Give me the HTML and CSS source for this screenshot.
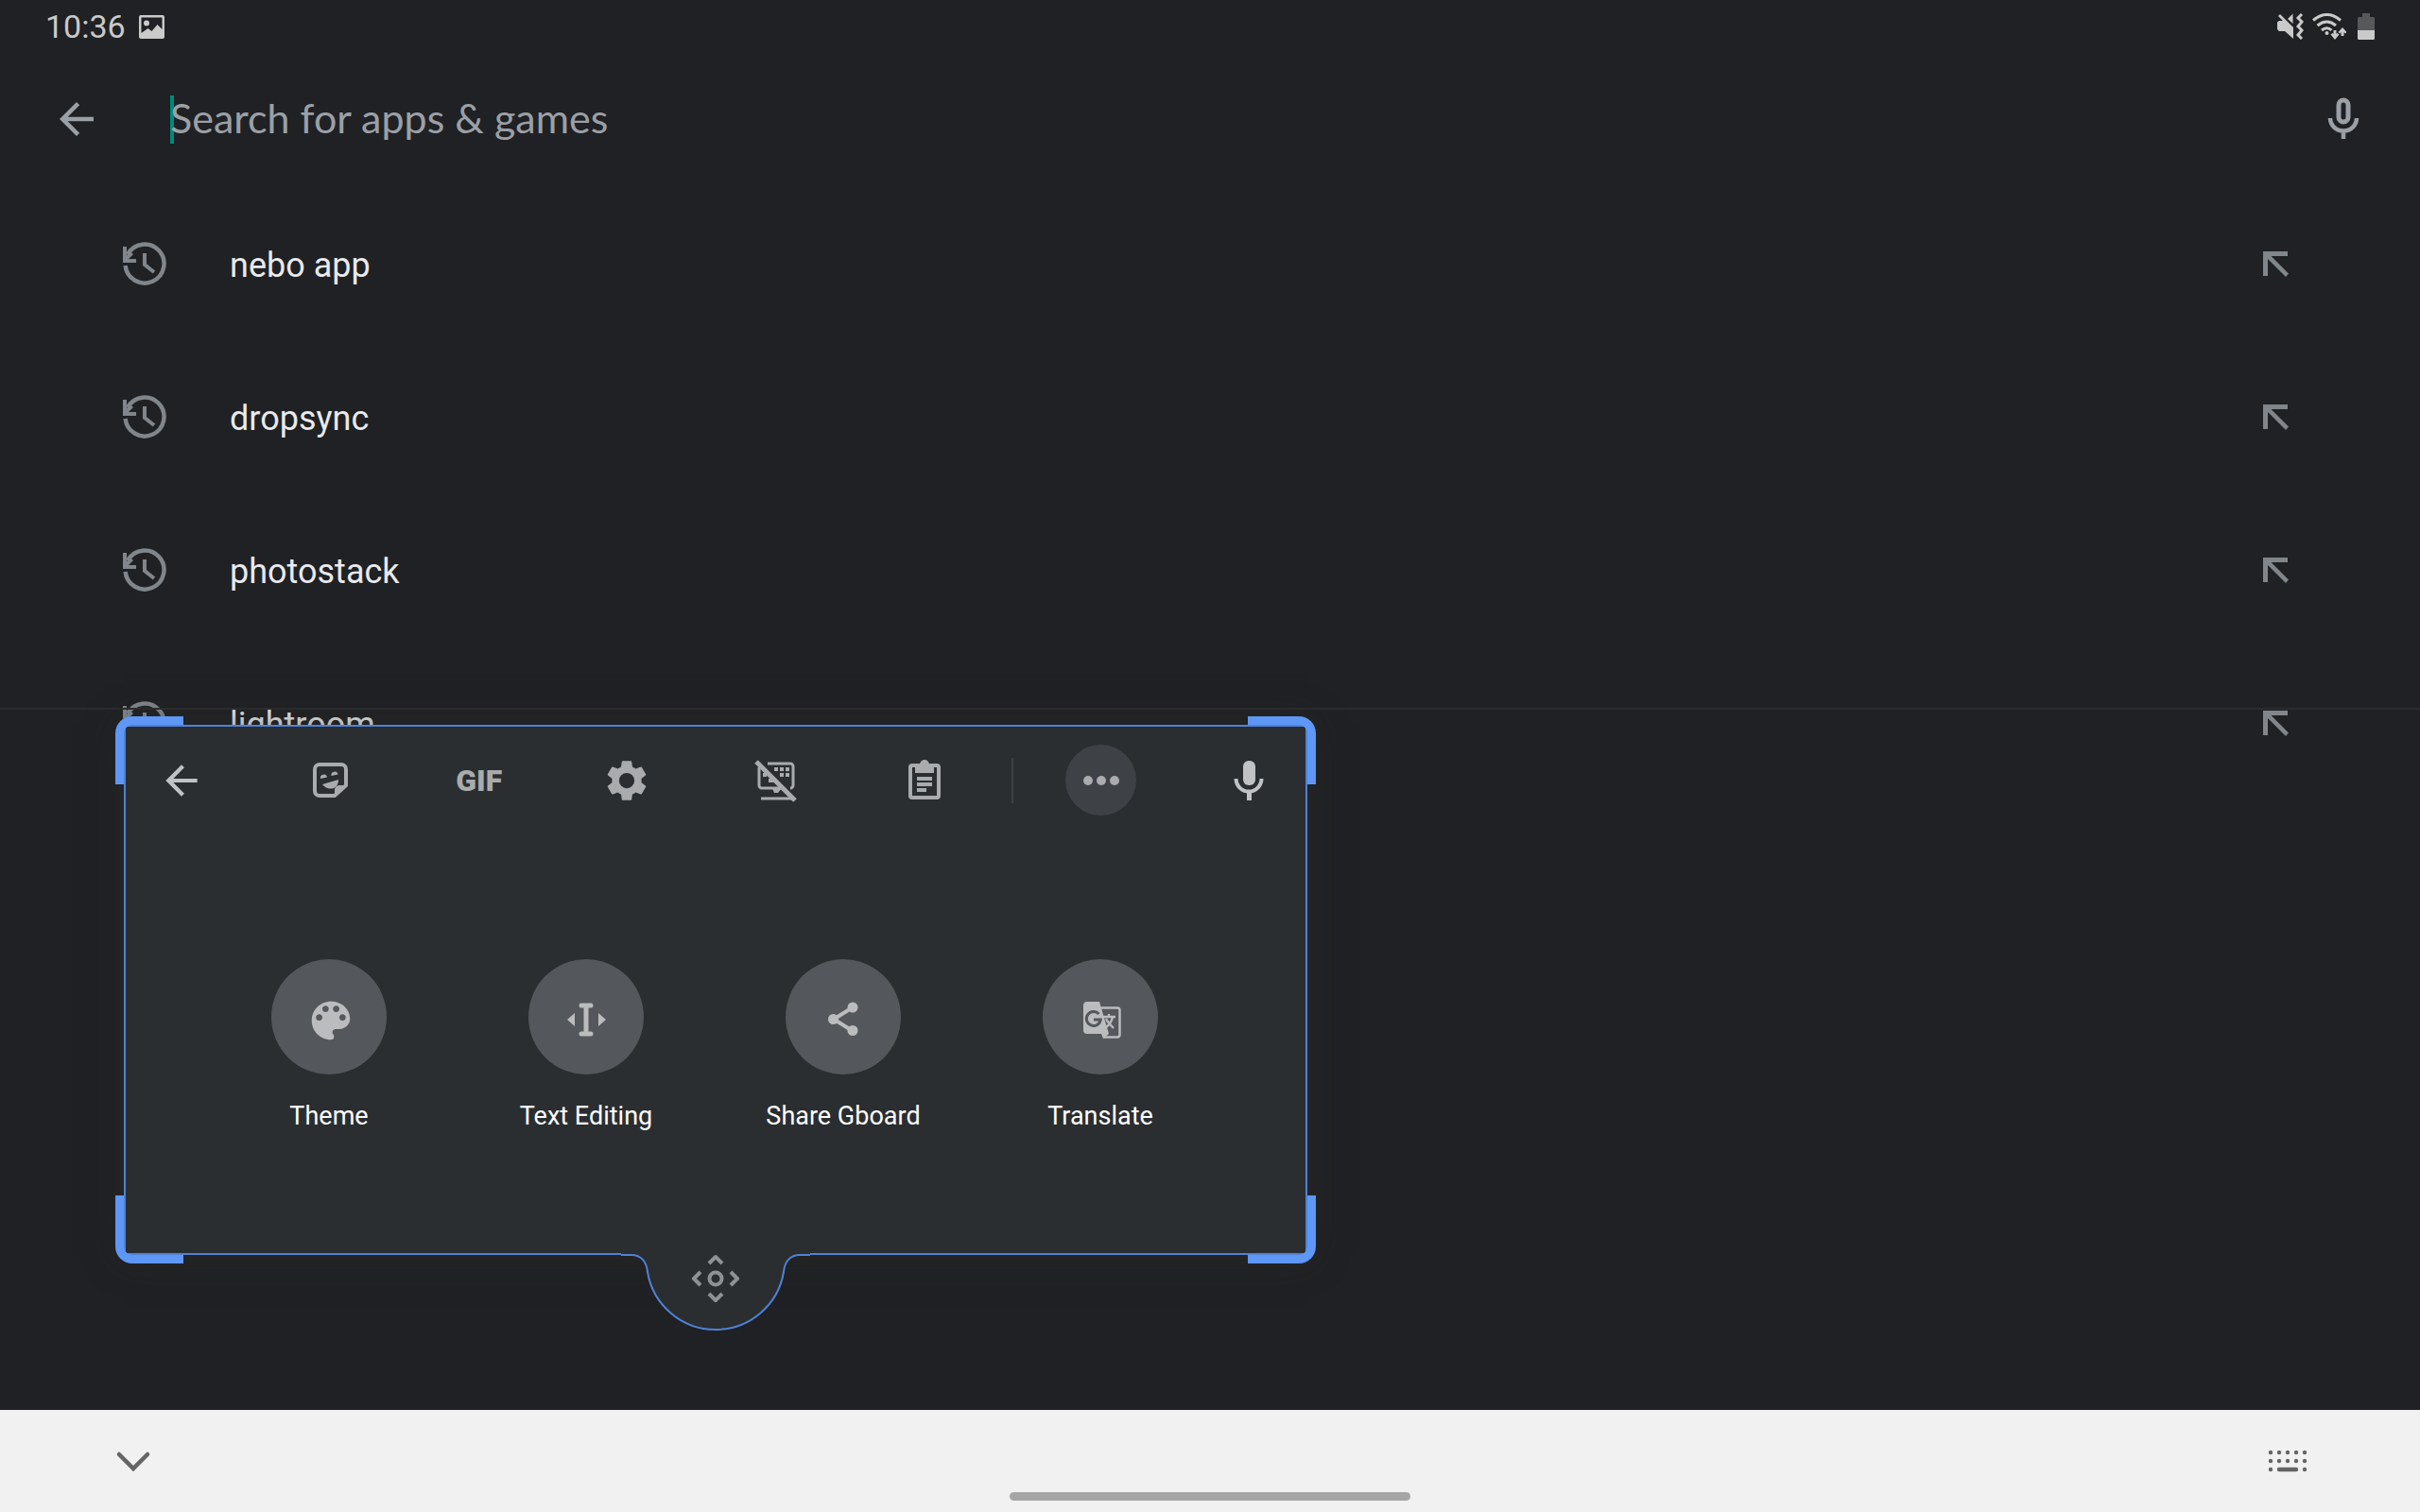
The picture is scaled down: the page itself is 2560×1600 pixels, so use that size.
FILE: index.html
```html
<!DOCTYPE html>
<html lang="en">
<head>
  <meta charset="UTF-8" />
  <meta name="viewport" content="width=device-width, initial-scale=1.0"/>
  <title>Search for apps &amp; games</title>
  <link rel="stylesheet" href="styles.css">
</head>
<body>
  <!-- Shared icons -->
  <svg class="sprite" aria-hidden="true">
    <symbol id="icon-back" viewBox="0 0 24 24"><path d="M20 11H7.83l5.59-5.59L12 4l-8 8 8 8 1.41-1.41L7.83 13H20v-2z"/></symbol>
    <symbol id="icon-history" viewBox="0 0 46 46">
      <path d="M5 13.200A20.500 20.500 0 1 1 2.600 25" fill="none" stroke="currentColor" stroke-width="4.500"/>
      <path d="M23 12v12l10 8" fill="none" stroke="currentColor" stroke-width="4"/>
      <path d="M0 5h4v9l4-4 3 3-5 5h8v4H0z"/>
    </symbol>
    <symbol id="icon-insert" viewBox="0 0 27 27"><path d="M0 0h26v5H8.500L27 23.500 24 27 5 8v18H0z"/></symbol>
  </svg>

  <div class="screen">
    <div class="status-bar">
      <div class="status-group">
        <span class="clock">10:36</span>
        <svg class="status-image" viewBox="0 0 27 25"><path fill-rule="evenodd" d="M2 0h23a2 2 0 0 1 2 2v21a2 2 0 0 1-2 2H2a2 2 0 0 1-2-2V2a2 2 0 0 1 2-2zM2.500 2.500V19l7-5 4 3 6-7 5 5V2.500zM8 5.500a3 3 0 1 1 0 6 3 3 0 0 1 0-6z"/></svg>
      </div>
      <div class="status-group">
        <svg class="status-mute" viewBox="0 0 28 28">
          <path d="M0 9.500L2 8h4L1 3l2-2 14 14v12L8 19H2l-2-2zM11 6l5.500-5.500V11z"/>
          <path d="M26 1l-4 4 4 4-4 5 4 4-4 5 4 4" fill="none" stroke="currentColor" stroke-width="3"/>
        </svg>
        <svg class="status-wifi" viewBox="0 0 36 28">
          <g fill="none" stroke="currentColor" stroke-width="3">
            <path d="M1 7.500q14.500-12 29 0M5.500 13q10-8 19.500 0M10 18q5.500-4.500 10.500 0"/>
            <path d="M24 18v7M32 24v-7"/>
          </g>
          <circle cx="15.500" cy="21" r="2"/>
          <path d="M19.500 22.500l2-1.500 2.500 2 2.500-2 2 1.500-4.500 5.500zM27.500 20l4.500-5 4.500 5-1.500 1.500-3-2.500-3 2.500z"/>
        </svg>
        <svg class="status-battery" viewBox="0 0 18 28">
          <path d="M5 0h8v4h3.500A1.500 1.500 0 0 1 18 5.500V18H0V5.500A1.500 1.500 0 0 1 1.500 4H5z" fill="#57585a"/>
          <path d="M0 18h18v8.500a1.500 1.500 0 0 1-1.500 1.500h-15A1.500 1.500 0 0 1 0 26.500z"/>
        </svg>
      </div>
    </div>

    <header class="search-bar">
      <button class="icon-btn" aria-label="Back"><svg class="icon"><use href="#icon-back"/></svg></button>
      <div class="search-field">
        <span class="caret"></span>
        <input class="search-input" type="text" placeholder="Search for apps &amp; games" aria-label="Search for apps &amp; games">
      </div>
      <button class="icon-btn" aria-label="Voice search">
        <svg class="icon" viewBox="0 0 54 54">
          <g fill="none" stroke="currentColor">
            <rect x="22" y="7" width="10" height="23" rx="5" stroke-width="5"/>
            <path d="M13 26a14 13.500 0 0 0 28 0M27 39v9" stroke-width="4.500"/>
          </g>
        </svg>
      </button>
    </header>

    <main class="content">
      <ul class="history">
        <li class="history-row">
          <svg class="history-icon"><use href="#icon-history"/></svg>
          <a class="history-text" href="#">nebo app</a>
          <button class="insert-btn" aria-label="Insert nebo app"><svg class="insert-icon"><use href="#icon-insert"/></svg></button>
        </li>
        <li class="history-row">
          <svg class="history-icon"><use href="#icon-history"/></svg>
          <a class="history-text" href="#">dropsync</a>
          <button class="insert-btn" aria-label="Insert dropsync"><svg class="insert-icon"><use href="#icon-insert"/></svg></button>
        </li>
        <li class="history-row">
          <svg class="history-icon"><use href="#icon-history"/></svg>
          <a class="history-text" href="#">photostack</a>
          <button class="insert-btn" aria-label="Insert photostack"><svg class="insert-icon"><use href="#icon-insert"/></svg></button>
        </li>
        <li class="history-row">
          <svg class="history-icon"><use href="#icon-history"/></svg>
          <a class="history-text" href="#">lightroom</a>
          <button class="insert-btn" aria-label="Insert lightroom"><svg class="insert-icon"><use href="#icon-insert"/></svg></button>
        </li>
      </ul>
      <div class="ime-line"></div>
    </main>

    <nav class="nav-bar">
      <button class="nav-btn" aria-label="Hide keyboard">
        <svg class="nav-icon" viewBox="0 0 42 42"><path d="M7 14l15 15 15-15" fill="none" stroke="currentColor" stroke-width="4.500" stroke-linecap="round"/></svg>
      </button>
      <span class="home-pill"></span>
      <button class="nav-btn" aria-label="Change keyboard">
        <svg class="nav-icon" viewBox="0 0 42 42">
          <g fill="none" stroke="currentColor" stroke-width="4.400" stroke-linecap="round">
            <path d="M3 12h0M12 12h0M21 12h0M30 12h0M39 12h0M3 21h0M12 21h0M21 21h0M30 21h0M39 21h0M3 30h0M12 30h18M39 30h0"/>
          </g>
        </svg>
      </button>
    </nav>

    <!-- Floating keyboard -->
    <section class="keyboard" aria-label="Keyboard">
      <span class="corner corner-tl"></span>
      <span class="corner corner-tr"></span>
      <span class="corner corner-bl"></span>
      <span class="corner corner-br"></span>

      <div class="toolbar">
        <div class="tools">
          <button class="icon-btn bright" aria-label="Back"><svg class="icon icon-small"><use href="#icon-back"/></svg></button>
          <button class="icon-btn" aria-label="Stickers">
            <svg class="icon" viewBox="0 0 54 54">
              <path d="M17 10h23a5 5 0 0 1 5 5v17L33 43H17a5 5 0 0 1-5-5V15a5 5 0 0 1 5-5z" fill="none" stroke="currentColor" stroke-width="4"/>
              <path d="M33 44v-7a5 5 0 0 1 5-5h9z"/>
              <path d="M20 31l17-5c0 6-3 9-7 9.500S22 34 20 31zM18 25a3.500 3.500 0 1 1 7-1.500zM29.500 22a3.500 3.500 0 1 1 7-1.500z"/>
            </svg>
          </button>
          <button class="icon-btn gif-btn">GIF</button>
          <button class="icon-btn" aria-label="Settings">
            <svg class="icon icon-small" viewBox="0 0 24 24"><path d="M19.430 12.980c.04-.32.07-.64.07-.98s-.03-.66-.07-.98l2.110-1.650c.19-.15.24-.42.12-.64l-2-3.460c-.12-.22-.39-.3-.61-.22l-2.490 1c-.52-.4-1.080-.73-1.690-.98l-.38-2.650C14.460 2.180 14.250 2 14 2h-4c-.25 0-.46.18-.49.42l-.38 2.650c-.61.25-1.170.59-1.690.98l-2.490-1c-.23-.09-.49 0-.61.22l-2 3.460c-.13.22-.07.49.12.64l2.110 1.650c-.04.32-.07.65-.07.98s.03.66.07.98l-2.110 1.650c-.19.15-.24.42-.12.64l2 3.460c.12.22.39.3.61.22l2.490-1c.52.4 1.080.73 1.690.98l.38 2.650c.03.24.24.42.49.42h4c.25 0 .46-.18.49-.42l.38-2.650c.61-.25 1.170-.59 1.690-.98l2.490 1c.23.09.49 0 .61-.22l2-3.460c.12-.22.07-.49-.12-.64l-2.110-1.650zM12 15.900a3.900 3.900 0 1 1 0-7.800 3.900 3.900 0 0 1 0 7.800z"/></svg>
          </button>
          <button class="icon-btn" aria-label="Floating keyboard">
            <svg class="icon" viewBox="0 0 54 54">
              <g fill="none" stroke="currentColor">
                <path d="M19 9h24a3 3 0 0 1 3 3v20a3 3 0 0 1-3 3M10 13v19a3 3 0 0 0 3 3h20" stroke-width="3"/>
                <path d="M12 46h34" stroke-width="3"/>
                <path d="M7 7l41 41" stroke-width="5"/>
              </g>
              <path d="M26 13h4v4h-4zM32 13h4v4h-4zM38 13h4v4h-4zM32 19h4v4h-4zM38 19h4v4h-4zM14 19h4v4h-4zM20 25h8v4h-8zM24 35h10l-4 5h-4z"/>
            </svg>
          </button>
          <button class="icon-btn" aria-label="Clipboard">
            <svg class="icon" viewBox="0 0 54 54">
              <rect x="12" y="11" width="30" height="34" rx="2" fill="none" stroke="currentColor" stroke-width="4"/>
              <path fill-rule="evenodd" d="M17 10h5a5 5 0 0 1 10 0h5v9H17zM27 9a2 2 0 1 0 0 4 2 2 0 0 0 0-4z"/>
              <path d="M19 23h16v4H19zM19 29h16v4H19zM19 35h10v4H19z"/>
            </svg>
          </button>
        </div>
        <span class="tool-divider"></span>
        <div class="tools tools-end">
          <button class="icon-btn more-btn" aria-label="More">
            <svg class="icon" viewBox="0 0 54 54"><circle cx="13" cy="27" r="5"/><circle cx="27" cy="27" r="5"/><circle cx="41" cy="27" r="5"/></svg>
          </button>
          <button class="icon-btn bright" aria-label="Voice typing">
            <svg class="icon" viewBox="0 0 54 54">
              <rect x="21" y="6" width="13" height="26" rx="6"/>
              <path d="M13.500 25a13.500 13.500 0 0 0 27 0" fill="none" stroke="currentColor" stroke-width="4"/>
              <path d="M25 38h5v10h-5z"/>
            </svg>
          </button>
        </div>
      </div>

      <div class="tiles">
        <button class="tile">
          <span class="tile-circle">
            <svg class="tile-icon" viewBox="0 0 54 54"><path transform="translate(2 1) scale(2.25)" d="M12 3c-4.970 0-9 4.030-9 9s4.030 9 9 9c.83 0 1.500-.67 1.500-1.500 0-.39-.15-.74-.39-1.010-.23-.26-.38-.61-.38-.99 0-.83.67-1.500 1.500-1.500H16c2.760 0 5-2.240 5-5 0-4.420-4.030-8-9-8zm-5.500 9c-.83 0-1.500-.67-1.500-1.500S5.670 9 6.500 9 8 9.670 8 10.500 7.330 12 6.500 12zm3-4C8.670 8 8 7.330 8 6.500S8.670 5 9.500 5s1.500.67 1.500 1.500S10.330 8 9.500 8zm5 0c-.83 0-1.500-.67-1.500-1.500S13.670 5 14.500 5s1.500.67 1.500 1.500S15.330 8 14.500 8zm3 4c-.83 0-1.500-.67-1.500-1.500S16.670 9 17.500 9s1.500.67 1.500 1.500-.67 1.500-1.500 1.500z"/></svg>
          </span>
          <span class="tile-label">Theme</span>
        </button>
        <button class="tile">
          <span class="tile-circle">
            <svg class="tile-icon" viewBox="0 0 54 54">
              <path d="M22 12h10M22 42h10M27 12v30" fill="none" stroke="currentColor" stroke-width="5" stroke-linecap="round"/>
              <path d="M15 20v14l-8-7zM40 20v14l8-7z"/>
            </svg>
          </span>
          <span class="tile-label">Text Editing</span>
        </button>
        <button class="tile">
          <span class="tile-circle">
            <svg class="tile-icon" viewBox="0 0 54 54">
              <path d="M37 14L17 26.500 37 39" fill="none" stroke="currentColor" stroke-width="4"/>
              <circle cx="37" cy="14" r="5.500"/><circle cx="16.500" cy="26.500" r="5.500"/><circle cx="37" cy="38.500" r="5.500"/>
            </svg>
          </span>
          <span class="tile-label">Share Gboard</span>
        </button>
        <button class="tile">
          <span class="tile-circle">
            <svg class="tile-icon" viewBox="0 0 54 54">
              <g transform="translate(2 1)">
                <path d="M11 7h13l10 34H11a4 4 0 0 1-4-4V11a4 4 0 0 1 4-4z"/>
                <path d="M25 13.500h18a2.500 2.500 0 0 1 2.500 2.500v26a2.500 2.500 0 0 1-2.500 2.500H28" fill="none" stroke="currentColor" stroke-width="2.500"/>
                <path d="M26 41h8l-6 5z"/>
                <path d="M23.500 20a7.500 7.500 0 1 0 1.800 6H18" fill="none" stroke="#54575b" stroke-width="3"/>
                <path d="M28 23h13M34 20v3M38 23c-1 6-4 9-8 12M31 25c2 4 5 7 8 10" fill="none" stroke="currentColor" stroke-width="2.300"/>
              </g>
            </svg>
          </span>
          <span class="tile-label">Translate</span>
        </button>
      </div>

      <button class="drag-handle" aria-label="Move keyboard">
        <svg class="drag-shape" viewBox="0 0 200 90">
          <path d="M0 0V2H11C21 2 27 9 28 20A73 73 0 0 0 172 20C173 9 179 2 189 2H200V0z" fill="#2a2e31"/>
          <path d="M0 2H11C21 2 27 9 28 20A73 73 0 0 0 172 20C173 9 179 2 189 2H200" fill="none" stroke="#5081d4" stroke-width="2"/>
          <g fill="none" stroke="#8f9294" stroke-width="4">
            <circle cx="100" cy="27" r="6.500"/>
            <path d="M93 11l7-7 7 7M93 43l7 7 7-7M84 20l-7 7 7 7M116 20l7 7-7 7" stroke-linejoin="round"/>
          </g>
        </svg>
      </button>
    </section>
  </div>
</body>
</html>
```

FILE: styles.css
```css
* {
  box-sizing: border-box;
}

body {
  font-family: Roboto, "Noto Sans", sans-serif;
  background-color: #202124;
  color: #e8eaed;
  margin: 0;
}

button {
  background: none;
  border: none;
  padding: 0;
  color: inherit;
  font-family: inherit;
  cursor: pointer;
}

svg {
  display: block;
  fill: currentColor;
}

.sprite {
  position: absolute;
  width: 0;
  height: 0;
}

.screen {
  position: relative;
  display: flex;
  flex-direction: column;
  min-height: 100vh;
  overflow: hidden;
}

/* Status bar */
.status-bar {
  display: flex;
  justify-content: space-between;
  align-items: center;
  height: 56px;
  padding: 0 48px;
  color: #c9cac9;
}

.status-group {
  display: flex;
  align-items: center;
  gap: 9px;
}

.clock {
  font-size: 34px;
  line-height: 56px;
  margin-right: 5px;
}

.status-image {
  width: 27px;
  height: 25px;
}

.status-mute {
  width: 28px;
  height: 28px;
}

.status-wifi {
  width: 36px;
  height: 28px;
  margin-right: 3px;
}

.status-battery {
  width: 18px;
  height: 28px;
}

/* Search */
.search-bar {
  display: flex;
  align-items: center;
  height: 140px;
  padding: 0 54px;
  color: #9aa0a6;
}

.icon-btn {
  flex: none;
}

.icon {
  width: 54px;
  height: 54px;
}

.icon-small {
  width: 50px;
  height: 50px;
}

.search-field {
  flex: 1;
  display: flex;
  align-items: center;
  margin-left: 72px;
}

.caret {
  width: 4px;
  height: 51px;
  margin-right: -4px;
  background-color: #01897b;
}

.search-input {
  position: relative;
  flex: 1;
  height: 60px;
  padding: 0 0 4px;
  background: none;
  border: none;
  outline: none;
  color: #e8eaed;
  font-family: Lato, "Open Sans", sans-serif;
  font-size: 43px;
}

.search-input::placeholder {
  color: #9aa0a6;
  opacity: 1;
}

/* Search history */
.content {
  position: relative;
  flex: 1;
}

.history {
  list-style: none;
  margin: 0;
  padding: 2px 0 0;
}

.history-row {
  display: flex;
  align-items: center;
  height: 162px;
  padding: 0 139px 0 130px;
}

.history-icon {
  width: 46px;
  height: 46px;
  color: #80868b;
}

.history-text {
  flex: 1;
  margin-left: 67px;
  padding-top: 4px;
  color: #e8eaed;
  font-size: 36px;
  line-height: 54px;
  text-decoration: none;
}

.insert-icon {
  width: 27px;
  height: 27px;
  color: #80868b;
}

.ime-line {
  position: absolute;
  top: 553px;
  left: 0;
  right: 0;
  height: 2px;
  background-color: #2b2c2f;
}

/* Navigation bar */
.nav-bar {
  display: flex;
  justify-content: space-between;
  align-items: center;
  height: 108px;
  padding: 0 119px;
  background-color: #f1f1f1;
  color: #656565;
}

.nav-icon {
  width: 42px;
  height: 42px;
}

.home-pill {
  align-self: flex-end;
  width: 424px;
  height: 9px;
  margin-bottom: 12px;
  border-radius: 5px;
  background-color: #a6a6a6;
}

/* Floating keyboard */
.keyboard {
  position: absolute;
  top: 767px;
  left: 131px;
  width: 1252px;
  height: 561px;
  background-color: #2a2e31;
  border: 2px solid #5081d4;
  box-shadow: 0 0 36px rgba(48, 46, 40, 0.5);
}

.corner {
  position: absolute;
  width: 72px;
  height: 72px;
  border: 0 solid #5e97f6;
}

.corner-tl {
  top: -11px;
  left: -11px;
  border-width: 9px 0 0 9px;
  border-top-left-radius: 18px;
}

.corner-tr {
  top: -11px;
  right: -11px;
  border-width: 9px 9px 0 0;
  border-top-right-radius: 18px;
}

.corner-bl {
  bottom: -11px;
  left: -11px;
  border-width: 0 0 9px 9px;
  border-bottom-left-radius: 18px;
}

.corner-br {
  bottom: -11px;
  right: -11px;
  border-width: 0 9px 9px 0;
  border-bottom-right-radius: 18px;
}

.toolbar {
  display: flex;
  align-items: center;
  height: 113px;
  padding: 0 33px 0 34px;
  color: #a9abad;
}

.tools {
  flex: 1;
  display: flex;
  align-items: center;
  justify-content: space-between;
}

.tools-end {
  flex: none;
  width: 221px;
}

.tool-divider {
  width: 2px;
  height: 48px;
  margin: 0 55px 0 65px;
  background-color: #3c4043;
}

.bright {
  color: #c1c2c4;
}

.gif-btn {
  width: 54px;
  font-size: 32px;
  font-weight: 900;
  line-height: 54px;
}

.more-btn {
  display: flex;
  align-items: center;
  justify-content: center;
  width: 75px;
  height: 75px;
  border-radius: 50%;
  background-color: #3e4145;
}

.tiles {
  display: grid;
  grid-template-columns: repeat(4, 1fr);
  padding: 133px 81px 0 79px;
}

.tile {
  display: flex;
  flex-direction: column;
  align-items: center;
  gap: 26px;
}

.tile-circle {
  display: flex;
  align-items: center;
  justify-content: center;
  width: 122px;
  height: 122px;
  padding-top: 6px;
  border-radius: 50%;
  background-color: #54575b;
  color: #bbbcbe;
}

.tile-icon {
  width: 54px;
  height: 54px;
}

.tile-label {
  color: #fff;
  font-size: 27px;
  line-height: 36px;
}

.drag-handle {
  position: absolute;
  bottom: -90px;
  left: 50%;
  width: 200px;
  height: 90px;
  margin-left: -100px;
}

.drag-shape {
  width: 200px;
  height: 90px;
}
```
